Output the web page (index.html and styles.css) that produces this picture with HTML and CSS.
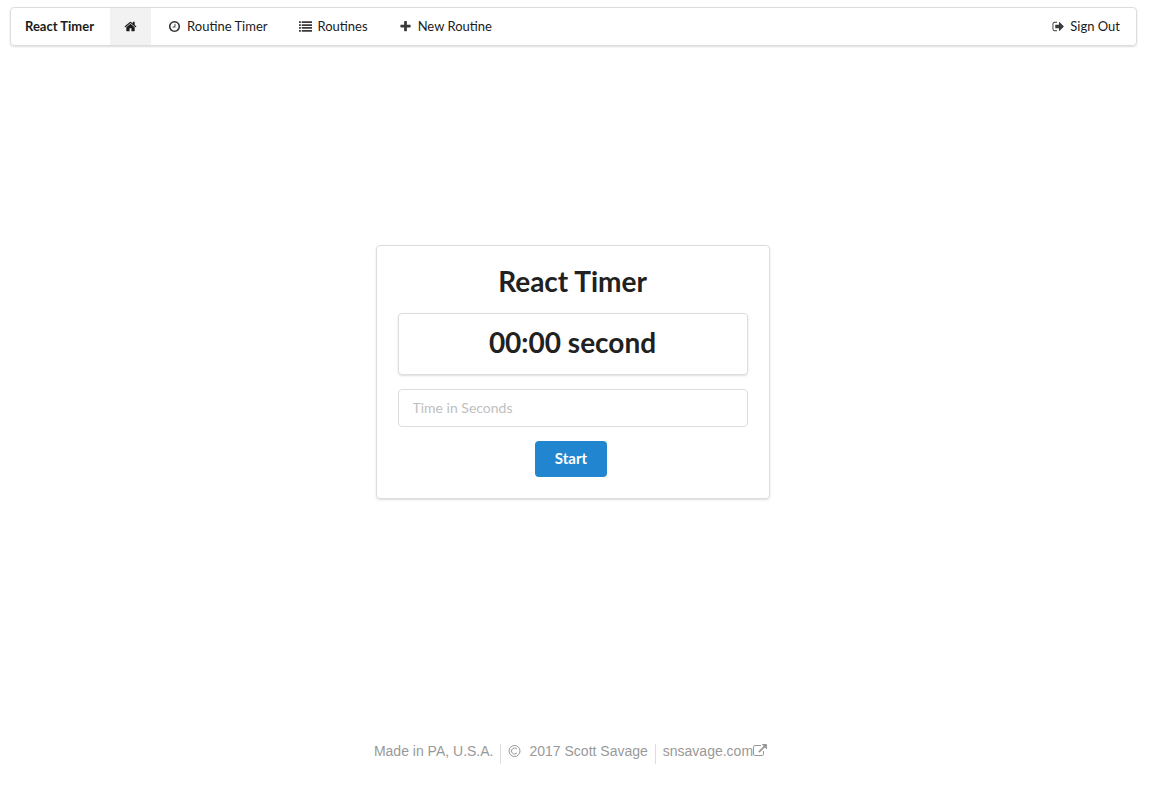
FILE: index.html
```html
<!DOCTYPE html>
<html lang="en">
<head>
<meta charset="utf-8">
<meta name="viewport" content="width=device-width, initial-scale=1">
<title>React Timer</title>
<link rel="stylesheet" href="styles.css">
</head>
<body>
<nav class="menu">
  <a class="item brand" href="#">React Timer</a>
  <a class="item active" href="#" aria-label="Home"><svg class="icon" viewBox="0 0 1792 1792"><path d="M1472 992v480q0 26-19 45t-45 19h-384v-384h-256v384h-384q-26 0-45-19t-19-45v-480q0-1 .5-3t.5-3l575-474 575 474q1 2 1 6zm223-69l-62 74q-8 9-21 11h-3q-13 0-21-7l-692-577-692 577q-12 8-24 7-13-2-21-11l-62-74q-8-10-7-23.5t11-21.5l719-599q32-26 76-26t76 26l244 204v-195q0-14 9-23t23-9h192q14 0 23 9t9 23v408l219 182q10 8 11 21.5t-7 23.5z"/></svg></a>
  <a class="item" href="#"><svg class="icon" viewBox="0 0 1792 1792"><path d="M1024 544v448q0 14-9 23t-23 9h-320q-14 0-23-9t-9-23v-64q0-14 9-23t23-9h224v-352q0-14 9-23t23-9h64q14 0 23 9t9 23zm416 352q0-148-73-273t-198-198-273-73-273 73-198 198-73 273 73 273 198 198 273 73 273-73 198-198 73-273zm224 0q0 209-103 385.5t-279.5 279.5-385.5 103-385.5-103-279.5-279.5-103-385.5 103-385.5 279.5-279.5 385.5-103 385.5 103 279.5 279.5 103 385.5z"/></svg>Routine Timer</a>
  <a class="item" href="#"><svg class="icon" viewBox="0 0 14 14"><path d="M0 1.4h2v1.9H0zM3 1.4h11v1.9H3zM0 4.5h2v1.9H0zM3 4.5h11v1.9H3zM0 7.6h2v1.9H0zM3 7.6h11v1.9H3zM0 10.7h2v1.9H0zM3 10.7h11v1.9H3z"/></svg>Routines</a>
  <a class="item" href="#"><svg class="icon" viewBox="0 0 1792 1792"><path d="M1600 736v192q0 40-28 68t-68 28h-416v416q0 40-28 68t-68 28h-192q-40 0-68-28t-28-68v-416h-416q-40 0-68-28t-28-68v-192q0-40 28-68t68-28h416v-416q0-40 28-68t68-28h192q40 0 68 28t28 68v416h416q40 0 68 28t28 68z"/></svg>New Routine</a>
  <a class="item end" href="#"><svg class="icon" viewBox="0 0 1792 1792"><path d="M704 1440q0 4 1 20t.5 26.5-3 23.5-10 19.5-20.5 6.5h-320q-119 0-203.5-84.5t-84.5-203.5v-704q0-119 84.5-203.5t203.5-84.5h320q13 0 22.5 9.5t9.5 22.5q0 4 1 20t.5 26.5-3 23.5-10 19.5-20.5 6.5h-320q-66 0-113 47t-47 113v704q0 66 47 113t113 47h312l11.5 1 11.5 3 8 5.5 7 9 2 13.5zm928-544q0 26-19 45l-544 544q-19 19-45 19t-45-19-19-45v-288h-448q-26 0-45-19t-19-45v-384q0-26 19-45t45-19h448v-288q0-26 19-45t45-19 45 19l544 544q19 19 19 45z"/></svg>Sign Out</a>
</nav>
<main class="main">
  <form class="card">
    <h1 class="title">React Timer</h1>
    <div class="display">00:00 second</div>
    <input class="field" type="text" placeholder="Time in Seconds" aria-label="Time in Seconds">
    <button class="button" type="button">Start</button>
  </form>
</main>
<footer class="footer">
  <span class="note">Made in PA, U.S.A.</span>
  <span class="note"><svg class="copy" viewBox="0 0 14 14" role="img" aria-label="Copyright"><circle cx="6.5" cy="7" r="5.5"/><path d="M9 5.3A3 3 0 1 0 9 8.7"/></svg>2017 Scott Savage</span>
  <a class="note" href="#">snsavage.com<svg class="external" viewBox="0 0 1792 1792"><path d="M1408 928v320q0 119-84.5 203.5t-203.5 84.5h-832q-119 0-203.5-84.5t-84.5-203.5v-832q0-119 84.5-203.5t203.5-84.5h704q14 0 23 9t9 23v64q0 14-9 23t-23 9h-704q-66 0-113 47t-47 113v832q0 66 47 113t113 47h832q66 0 113-47t47-113v-320q0-14 9-23t23-9h64q14 0 23 9t9 23zm384-864v512q0 26-19 45t-45 19-45-19l-176-176-652 652q-10 10-23 10t-23-10l-114-114q-10-10-10-23t10-23l652-652-176-176q-19-19-19-45t19-45 45-19h512q26 0 45 19t19 45z"/></svg></a>
</footer>
</body>
</html>
```
FILE: styles.css
```css
* { box-sizing: border-box; }

body {
  margin: 0;
  min-height: 100vh;
  padding: 7px 14px 22px 10px;
  display: flex;
  flex-direction: column;
  background: #fff;
  color: #212121;
  font-family: Lato, "Liberation Sans", sans-serif;
  font-size: 14px;
}

.menu {
  display: flex;
  border: 1px solid #dcdddd;
  border-radius: 4px;
  box-shadow: 0 1px 2px rgba(34, 36, 38, 0.15);
  font-size: 13px;
}

.item {
  display: flex;
  align-items: center;
  padding: 10px 15px;
  border-right: 1px solid transparent;
  line-height: 17px;
  color: #1b1b1b;
  text-decoration: none;
}

.brand { padding: 10px 15px 10px 14px; font-weight: 700; }
.active { padding: 10px 14px; border-right: 0; background: #f2f2f2; }
.active + .item { padding-left: 17px; }
.end { margin-left: auto; }

.icon {
  width: 13px;
  height: 13px;
  margin-right: 6px;
  fill: #3a3a3a;
}

.active .icon { margin: 0; fill: #1b1b1b; }
.end .icon { margin-right: 5px; }

.main {
  flex: 1;
  display: flex;
  align-items: center;
  justify-content: center;
  padding: 0 2px 46px 0;
}

.card {
  width: 100%;
  max-width: 394px;
  padding: 21px;
  display: flex;
  flex-direction: column;
  align-items: center;
  gap: 14px;
  border: 1px solid #dcdddd;
  border-radius: 4px;
  box-shadow: 0 1px 2px rgba(34, 36, 38, 0.15);
}

.title, .display {
  margin: 0;
  padding-bottom: 4px;
  font-size: 28px;
  line-height: 28px;
  font-weight: 700;
  text-align: center;
}

.display {
  width: 100%;
  padding: 14px 14px 18px;
  border: 1px solid #dcdddd;
  border-radius: 4px;
  box-shadow: 0 1px 2px rgba(34, 36, 38, 0.15);
}

.field {
  width: 100%;
  height: 38px;
  padding: 0 14px 2px;
  border: 1px solid #dcdddd;
  border-radius: 4px;
  background: #fff;
  color: #212121;
  font: inherit;
}

.field::placeholder { color: #c0c0c0; opacity: 1; }

.button {
  height: 36px;
  margin-right: 3px;
  padding: 0 20px 2px;
  border: 0;
  border-radius: 4px;
  background: #2185d0;
  color: #fff;
  font: inherit;
  font-size: 15px;
  font-weight: 700;
}

.footer {
  display: flex;
  justify-content: center;
  padding-right: 6px;
  font-family: "Liberation Sans", Arial, sans-serif;
}

.note {
  display: flex;
  align-items: flex-start;
  height: 20px;
  padding: 0 7px;
  line-height: 14px;
  color: #999;
  text-decoration: none;
}

.note + .note { border-left: 1px solid #dcdddd; }

.copy {
  width: 14px;
  height: 14px;
  margin-right: 7px;
  fill: none;
  stroke: #999;
}

.external { width: 14px; height: 14px; fill: #999; }
```
